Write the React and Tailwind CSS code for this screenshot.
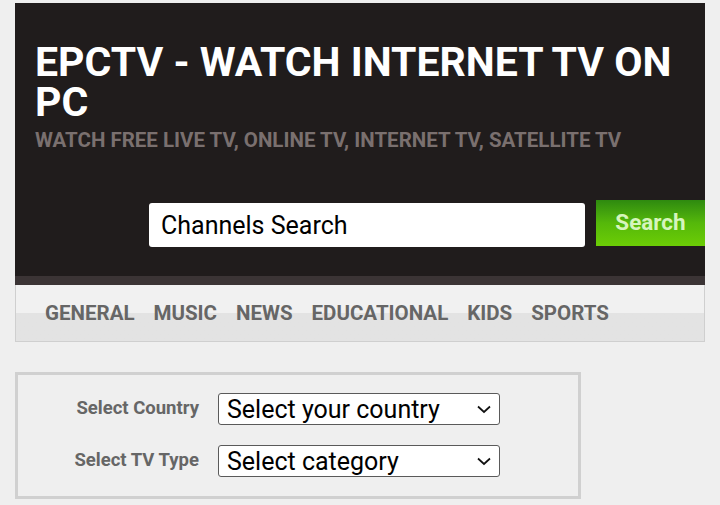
import React from 'react';

const navItems = ['GENERAL', 'MUSIC', 'NEWS', 'EDUCATIONAL', 'KIDS', 'SPORTS'];

function Chevron() {
  return (
    <svg width="18" height="18" viewBox="0 0 18 18" className="shrink-0">
      <path d="M3 6.5 L9 12 L15 6.5" fill="none" stroke="#111" strokeWidth="1.7" />
    </svg>
  );
}

function FakeSelect({ label, value }) {
  return (
    <div className="flex items-center">
      <div className="w-[181px] text-right text-[18.5px] font-bold text-[#666]">{label}</div>
      <div className="ml-[19px] flex h-[32px] w-[282px] items-center justify-between rounded-[3px] border border-[#5a5a5a] bg-white pl-[8px] pr-[6px]">
        <span className="text-[25px] leading-none text-black">{value}</span>
        <Chevron />
      </div>
    </div>
  );
}

export default function App() {
  return (
    <div className="min-h-[505px] w-[720px] bg-[#efefef] pt-[3px] font-['Roboto',sans-serif]">
      <div className="ml-[15px] w-[690px]">
        <header className="bg-[#201c1c] pt-[39px]">
          <div className="pl-[20px]">
            <h1 className="text-[41px] font-bold leading-[40px] text-white">
              EPCTV - WATCH INTERNET TV ON PC
            </h1>
            <p className="mt-[6px] text-[20.5px] font-bold leading-[24px] text-[#7a706f]">
              WATCH FREE LIVE TV, ONLINE TV, INTERNET TV, SATELLITE TV
            </p>
          </div>
          <div className="mt-[48px] flex items-start pb-[29px]">
            <div className="ml-[134px] mt-[3px] flex h-[44px] w-[436px] items-center rounded-[3px] bg-white pl-[12px]">
              <span className="text-[25px] leading-none text-black">Channels Search</span>
            </div>
            <button className="ml-[11px] flex h-[46px] w-[109px] items-center justify-center bg-gradient-to-b from-[#2e8a0f] via-[#55b80a] to-[#6ccd05] text-[22.5px] font-bold text-[#d6f5bd]">
              Search
            </button>
          </div>
          <div className="h-[9px] bg-[#3b3435]" />
        </header>
        <nav className="flex h-[57px] items-center gap-[19px] border-x border-b border-[#cfcfcf] bg-gradient-to-b from-[#f1f1f1] from-50% to-[#e3e3e3] to-50% pl-[29px]">
          {navItems.map(item => (
            <span key={item} className="text-[20.5px] font-bold text-[#666]">{item}</span>
          ))}
        </nav>
        <div className="mt-[30px] flex w-[566px] flex-col gap-[20px] border-[3px] border-[#d0d0d0] bg-[#efefef] pb-[19px] pt-[18px]">
          <FakeSelect label="Select Country" value="Select your country" />
          <FakeSelect label="Select TV Type" value="Select category" />
        </div>
      </div>
    </div>
  );
}
